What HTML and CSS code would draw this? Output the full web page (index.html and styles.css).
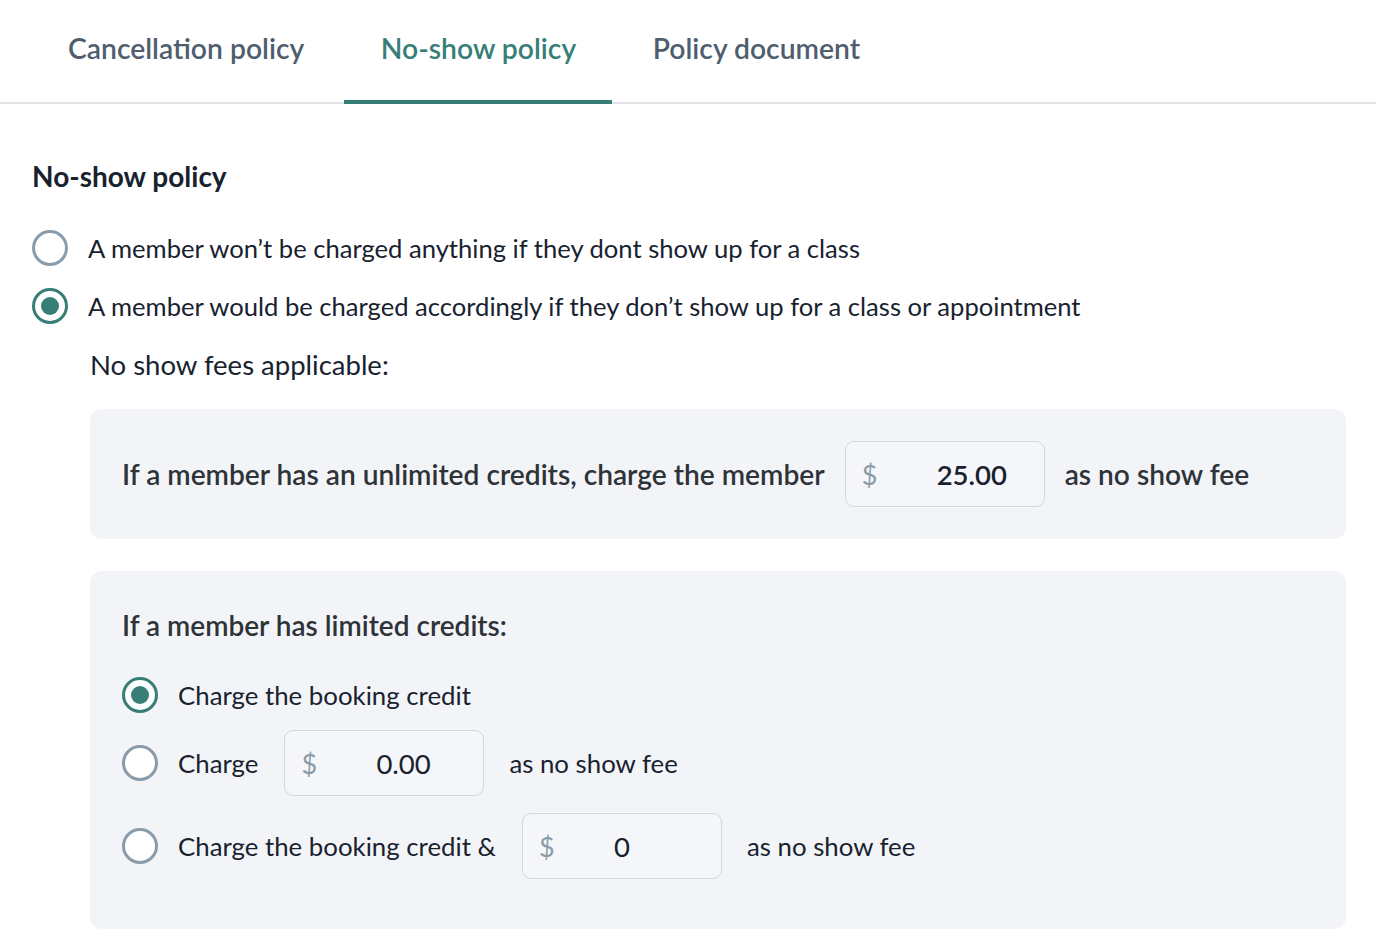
FILE: index.html
```html
<!DOCTYPE html>
<html>
<head>
<meta charset="utf-8">
<link rel="stylesheet" href="styles.css">
</head>
<body>
<div class="page">
  <nav class="tabs">
    <div class="tab">Cancellation policy</div>
    <div class="tab active">No-show policy</div>
    <div class="tab">Policy document</div>
  </nav>
  <section class="content">
    <h2 class="title">No-show policy</h2>
    <div class="options">
      <label class="radio-row"><span class="radio"></span><span class="label">A member won’t be charged anything if they dont show up for a class</span></label>
      <label class="radio-row"><span class="radio checked"></span><span class="label">A member would be charged accordingly if they don’t show up for a class or appointment</span></label>
    </div>
    <div class="fees">
      <div class="fees-title">No show fees applicable:</div>
      <div class="card card-unlimited">
        <span class="card-text strong">If a member has an unlimited credits, charge the member</span>
        <div class="money"><span class="cur">$</span><span class="val strong">25.00</span></div>
        <span class="card-text strong">as no show fee</span>
      </div>
      <div class="card card-limited">
        <div class="card-heading">If a member has limited credits:</div>
        <div class="sub-options">
          <div class="radio-row sub"><span class="radio checked"></span><span class="label">Charge the booking credit</span></div>
          <div class="radio-row sub"><span class="radio"></span><span class="label">Charge</span><div class="money"><span class="cur">$</span><span class="val">0.00</span></div><span class="label">as no show fee</span></div>
          <div class="radio-row sub"><span class="radio"></span><span class="label">Charge the booking credit &amp;</span><div class="money"><span class="cur">$</span><span class="val">0</span></div><span class="label">as no show fee</span></div>
        </div>
      </div>
    </div>
  </section>
</div>
</body>
</html>
```
FILE: styles.css
```css
* { box-sizing: border-box; }
body {
  margin: 0;
  background: #ffffff;
  font-family: Lato, "Noto Sans", sans-serif;
  color: #18222f;
}
.tabs {
  display: flex;
  gap: 3.5px;
  padding-left: 31px;
  border-bottom: 2px solid #dde2e7;
  height: 104px;
}
.tab {
  padding: 0 36px 4px 37px;
  font-size: 28.3px;
  font-weight: 600;
  color: #4f5e6f;
  display: flex;
  align-items: center;
  margin-bottom: -2px;
  border-bottom: 4px solid transparent;
}
.tab.active {
  color: #377e77;
  border-bottom-color: #377e77;
}
.content {
  padding: 0 30px 0 32px;
}
.title {
  margin: 0;
  padding-top: 56px;
  font-size: 28px;
  font-weight: 700;
  line-height: 32px;
  color: #18222f;
}
.options {
  margin-top: 38px;
  display: flex;
  flex-direction: column;
  gap: 22px;
}
.radio-row {
  display: flex;
  align-items: center;
  gap: 20px;
  min-height: 36px;
}
.radio {
  width: 36px;
  height: 36px;
  border-radius: 50%;
  border: 3.5px solid #8a9ca9;
  flex: none;
  background: #fff;
  position: relative;
}
.radio.checked {
  border-color: #377e77;
}
.radio.checked::after {
  content: "";
  position: absolute;
  left: 50%;
  top: 50%;
  width: 18px;
  height: 18px;
  margin: -9px 0 0 -9px;
  border-radius: 50%;
  background: #377e77;
}
.label {
  font-size: 25.6px;
  line-height: 30px;
  color: #18222f;
}
.fees {
  padding-left: 58px;
}
.fees-title {
  margin-top: 25px;
  font-size: 27.5px;
  line-height: 32px;
}
.card {
  background: #f3f4f8;
  border-radius: 12px;
}
.card-unlimited {
  margin-top: 28px;
  padding: 32px;
  display: flex;
  align-items: center;
  gap: 20px;
}
.card-text {
  font-size: 28.15px;
  color: #2e3338;
}
.strong { font-weight: 600; }
.money {
  width: 200px;
  height: 66px;
  border: 1px solid #d4d7dc;
  border-radius: 9px;
  display: flex;
  align-items: center;
  padding-left: 16px;
  flex: none;
  background: #f5f6f9;
}
.cur {
  font-size: 27px;
  color: #8a9ca9;
  width: 75px;
}
.val {
  font-size: 27.5px;
  color: #18222f;
}
.card-limited {
  margin-top: 32px;
  padding: 36px 32px 50px;
}
.card-heading {
  font-size: 28px;
  font-weight: 600;
  line-height: 36px;
  color: #2e3338;
}
.sub-options {
  margin-top: 34px;
  display: flex;
  flex-direction: column;
  gap: 17px;
}
.radio-row.sub:first-child { margin-bottom: 0; }
.radio-row.sub .money { margin-left: 6px; margin-right: 5px; }
.radio-row.sub .label { font-size: 25.8px; }
```
